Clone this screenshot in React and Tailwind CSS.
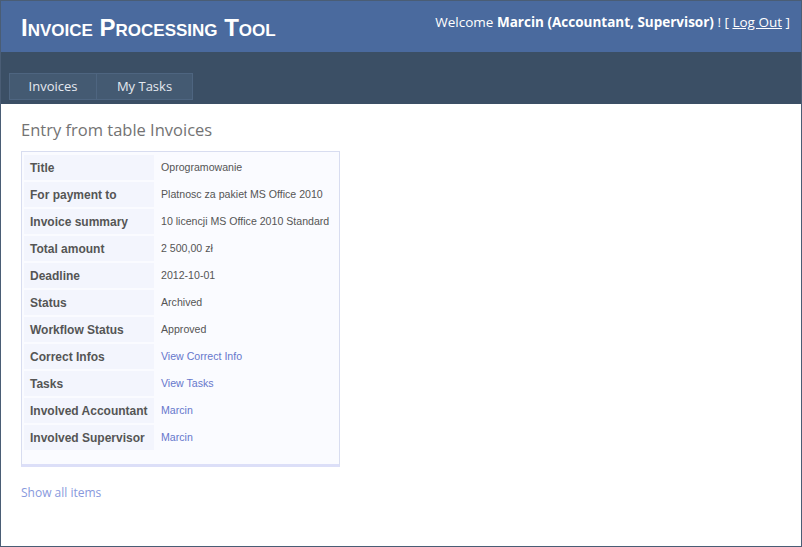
import React from 'react'

const rows = [
  ['Title', 'Oprogramowanie'],
  ['For payment to', 'Platnosc za pakiet MS Office 2010'],
  ['Invoice summary', '10 licencji MS Office 2010 Standard'],
  ['Total amount', '2 500,00 zł'],
  ['Deadline', '2012-10-01'],
  ['Status', 'Archived'],
  ['Workflow Status', 'Approved'],
  ['Correct Infos', 'View Correct Info', true],
  ['Tasks', 'View Tasks', true],
  ['Involved Accountant', 'Marcin', true],
  ['Involved Supervisor', 'Marcin', true],
]

export default function App() {
  return (
    <div className="w-[802px] h-[547px] flex flex-col border border-[#4a5d75] bg-white overflow-hidden"
      style={{ fontFamily: '"Open Sans", sans-serif' }}>
      {/* Header */}
      <div className="h-[51px] bg-[#4a6a9e] flex items-start justify-between pl-[20px] pr-[11px] shrink-0">
        <h1 className="mt-[12px] text-[24px] leading-[30px] font-bold text-white [font-variant:small-caps]"
          style={{ fontFamily: '"Liberation Sans", sans-serif' }}>
          Invoice Processing Tool
        </h1>
        <div className="mt-[11px] text-[13.5px] leading-[20px] text-white whitespace-nowrap">
          Welcome <b>Marcin (Accountant, Supervisor)</b> ! [ <a href="#" className="underline">Log Out</a> ]
        </div>
      </div>

      {/* Nav */}
      <div className="h-[52px] bg-[#3b4f65] flex items-end px-[8px] pb-[4px] shrink-0">
        <div className="flex">
          <div className="w-[88px] h-[27px] flex items-center justify-center bg-[#445a72] border border-[#4e6580] text-[13px] text-[#e4e9f0]">
            Invoices
          </div>
          <div className="w-[96px] h-[27px] flex items-center justify-center bg-[#445a72] border border-[#4e6580] border-l-0 text-[13px] text-[#e4e9f0]">
            My Tasks
          </div>
        </div>
      </div>

      {/* Content */}
      <div className="px-[20px] pt-[15px]">
        <h2 className="text-[16.5px] leading-[22px] text-[#737373]">Entry from table Invoices</h2>
        <div className="mt-[10px] w-[319px] bg-[#fafbff] border border-[#d8ddf0] border-b-[3px] border-b-[#dcdff8] px-[2px] pt-[3px] pb-[14px]"
          style={{ fontFamily: '"Liberation Sans", sans-serif' }}>
          <div className="flex flex-col gap-[2px]">
            {rows.map(([k, v, link]) => (
              <div key={k} className="flex h-[25px] items-stretch">
                <div className="w-[130px] shrink-0 bg-[#f3f5fd] pl-[6px] flex items-center text-[12px] font-bold text-[#555] whitespace-nowrap">{k}</div>
                <div className={`pl-[7px] flex items-center text-[10.6px] whitespace-nowrap ${link ? 'text-[#6677cc]' : 'text-[#555]'}`}>{v}</div>
              </div>
            ))}
          </div>
        </div>
        <a href="#" className="block mt-[17px] text-[12px] text-[#8899dd]">Show all items</a>
      </div>
    </div>
  )
}
